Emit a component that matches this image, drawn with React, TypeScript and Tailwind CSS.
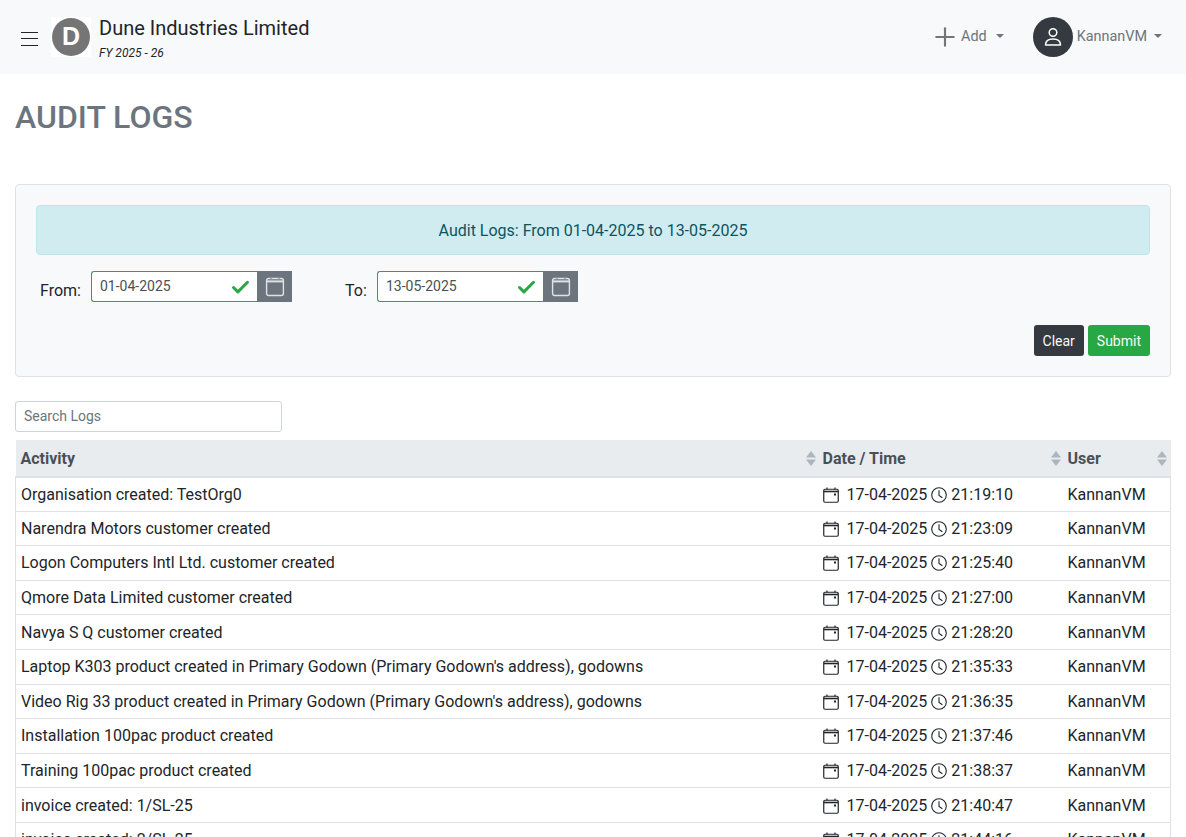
import { Plus, Check } from 'lucide-react';

const logs = [
  ['Organisation created: TestOrg0', '21:19:10'],
  ['Narendra Motors customer created', '21:23:09'],
  ['Logon Computers Intl Ltd. customer created', '21:25:40'],
  ['Qmore Data Limited customer created', '21:27:00'],
  ['Navya S Q customer created', '21:28:20'],
  ["Laptop K303 product created in Primary Godown (Primary Godown's address), godowns", '21:35:33'],
  ["Video Rig 33 product created in Primary Godown (Primary Godown's address), godowns", '21:36:35'],
  ['Installation 100pac product created', '21:37:46'],
  ['Training 100pac product created', '21:38:37'],
  ['invoice created: 1/SL-25', '21:40:47'],
  ['invoice created: 2/SL-25', '21:44:16'],
];

function Caret() {
  return <span className="inline-block border-x-[4px] border-t-[4px] border-x-transparent border-t-[#6c757d]" />;
}

function SortIcon() {
  return (
    <svg width="10" height="15" viewBox="0 0 10 15" className="shrink-0">
      <path d="M5 0 L10 6.5 H0 Z M5 15 L0 8.5 H10 Z" fill="#adb5bd" />
    </svg>
  );
}

function CalendarCell() {
  return (
    <svg width="16" height="16" viewBox="0 0 16 16" fill="none" className="shrink-0">
      <rect x="0.75" y="2.25" width="14.5" height="13" rx="1.2" stroke="#212529" strokeWidth="1.2" />
      <path d="M0.75 4.5 H15.25" stroke="#212529" strokeWidth="1.6" />
      <path d="M4 0.5 V2.5 M12 0.5 V2.5" stroke="#212529" strokeWidth="1.2" />
      <rect x="11" y="6.5" width="2" height="2" fill="#212529" />
    </svg>
  );
}

function ClockCell() {
  return (
    <svg width="16" height="16" viewBox="0 0 16 16" fill="none" stroke="#212529" strokeWidth="1.1" className="shrink-0">
      <circle cx="8" cy="8" r="7.3" />
      <path d="M8 3.2 V8.4 L11.4 10.8" />
    </svg>
  );
}

function DateField({ value, labelText, labelWidth }: { value: string; labelText: string; labelWidth: string }) {
  return (
    <div className="flex items-start">
      <label className={`${labelWidth} mt-[8px] leading-6 text-base text-[#212529]`}>{labelText}</label>
      <div className="flex w-[201px] h-[31px]">
        <div className="flex-1 flex items-center justify-between bg-white border border-r-0 border-[#28a745] rounded-l-[3px] pl-2 pr-[6px] pb-[1px] text-sm text-[#495057]">
          <span>{value}</span>
          <Check size={21} strokeWidth={3.4} className="text-[#28a745] mt-[2px]" />
        </div>
        <div className="w-[35px] flex items-center justify-center bg-[#6c757d]">
          <svg width="20" height="20" viewBox="0 0 20 20" fill="none" stroke="#dee2e6">
            <rect x="1.6" y="1.5" width="16.8" height="17" rx="2" strokeWidth="1.4" />
            <path d="M1.6 4.4 H18.4" strokeWidth="2" />
            <path d="M6 1 V2 M14 1 V2" stroke="#6c757d" strokeWidth="1" />
          </svg>
        </div>
      </div>
    </div>
  );
}

export default function App() {
  return (
    <div className="h-[837px] overflow-hidden bg-white text-[#212529]" style={{ fontFamily: 'Roboto, sans-serif' }}>
      <nav className="h-[74px] bg-[#f8f9fa] flex items-center pl-[21px] pr-6">
        <svg width="17" height="18" viewBox="0 0 17 18" stroke="#212529" strokeWidth="1.2">
          <path d="M0 4.5 H17 M0 10.5 H17 M0 17.5 H17" />
        </svg>
        <div className="ml-[13px] w-10 h-10 bg-white flex items-center justify-center">
          <div className="w-[38px] h-[38px] rounded-full bg-[#757575] flex items-center justify-center text-white font-bold text-[25px] font-['Liberation_Sans',sans-serif]">D</div>
        </div>
        <div className="ml-2">
          <div className="text-[20px] leading-[30px]">Dune Industries Limited</div>
          <div className="text-xs italic leading-[16px] mt-[2px]">FY 2025 - 26</div>
        </div>
        <div className="ml-auto flex items-center text-[14.4px] text-[#6c757d]">
          <Plus size={30} strokeWidth={1.7} className="text-[#757575] translate-x-px" />
          <span className="ml-[2px]">Add</span>
          <span className="ml-[9px] mb-[2px] flex"><Caret /></span>
          <div className="ml-[29px] w-10 h-10 rounded-full bg-[#343a40] flex items-center justify-center">
            <svg width="22" height="22" viewBox="0 0 22 22" fill="none" stroke="#fff" strokeWidth="1.5">
              <circle cx="11" cy="6.5" r="3.8" />
              <path d="M3.5 19 C3.5 14.5 7 13 11 13 C15 13 18.5 14.5 18.5 19 Z" strokeLinejoin="round" />
            </svg>
          </div>
          <span className="ml-1">KannanVM</span>
          <span className="ml-[7px] mb-[2px] flex"><Caret /></span>
        </div>
      </nav>

      <main className="px-[15px]">
        <h1 className="mt-[25px] text-[32px] leading-9 font-medium text-[#6c757d]">AUDIT LOGS</h1>

        <section className="mt-[49px] h-[193px] bg-[#f8f9fa] border border-[#dee2e6] rounded-[4px] px-5 pt-5">
          <div className="h-[50px] pt-[1px] flex items-center justify-center bg-[#d1ecf1] border border-[#bee5eb] rounded-[4px] text-base text-[#0c5460]">
            Audit Logs: From 01-04-2025 to 13-05-2025
          </div>
          <div className="flex h-[31px] mt-4 pl-[4px]">
            <DateField value="01-04-2025" labelText="From:" labelWidth="w-[51px]" />
            <div className="ml-[53px]">
              <DateField value="13-05-2025" labelText="To:" labelWidth="w-[32px]" />
            </div>
          </div>
          <div className="flex justify-end gap-1 mt-[23px]">
            <button className="h-[31px] px-[9px] bg-[#343a40] text-[#f8f9fa] text-sm rounded-[3px]">Clear</button>
            <button className="h-[31px] px-[9px] bg-[#28a745] text-[#f8f9fa] text-sm rounded-[3px]">Submit</button>
          </div>
        </section>

        <input
          placeholder="Search Logs"
          className="block mt-6 w-[267px] h-[31px] px-2 pb-[1px] bg-white border border-[#ced4da] rounded-[3px] text-sm placeholder:text-[#6c757d] outline-none"
        />

        <table className="mt-2 w-[1156px] table-fixed border-collapse text-base">
          <thead>
            <tr className="h-[36.5px] bg-[#e9ecef] text-[#495057] font-bold border-b-2 border-[#dee2e6]">
              <th className="w-[802px] pl-[5px] pr-[2px] pt-[2px] text-left font-bold">
                <div className="flex items-center justify-between">Activity<SortIcon /></div>
              </th>
              <th className="w-[245px] pl-[5px] pr-[2px] pt-[2px] text-left font-bold">
                <div className="flex items-center justify-between">Date / Time<SortIcon /></div>
              </th>
              <th className="pl-[5px] pr-[4px] pt-[2px] text-left font-bold">
                <div className="flex items-center justify-between">User<SortIcon /></div>
              </th>
            </tr>
          </thead>
          <tbody>
            {logs.map(([activity, time], i) => (
              <tr key={i} className="h-[34.6px] border-b border-[#dee2e6]">
                <td className="px-[5px] pt-[1px] border-l border-[#dee2e6]">{activity}</td>
                <td className="px-[5px] pt-[1px]">
                  <div className="flex items-center">
                    <CalendarCell />
                    <span className="ml-2">17-04-2025</span>
                    <span className="ml-1"><ClockCell /></span>
                    <span className="ml-1">{time}</span>
                  </div>
                </td>
                <td className="px-[5px] pt-[1px] border-r border-[#dee2e6]">KannanVM</td>
              </tr>
            ))}
          </tbody>
        </table>
      </main>
    </div>
  );
}
